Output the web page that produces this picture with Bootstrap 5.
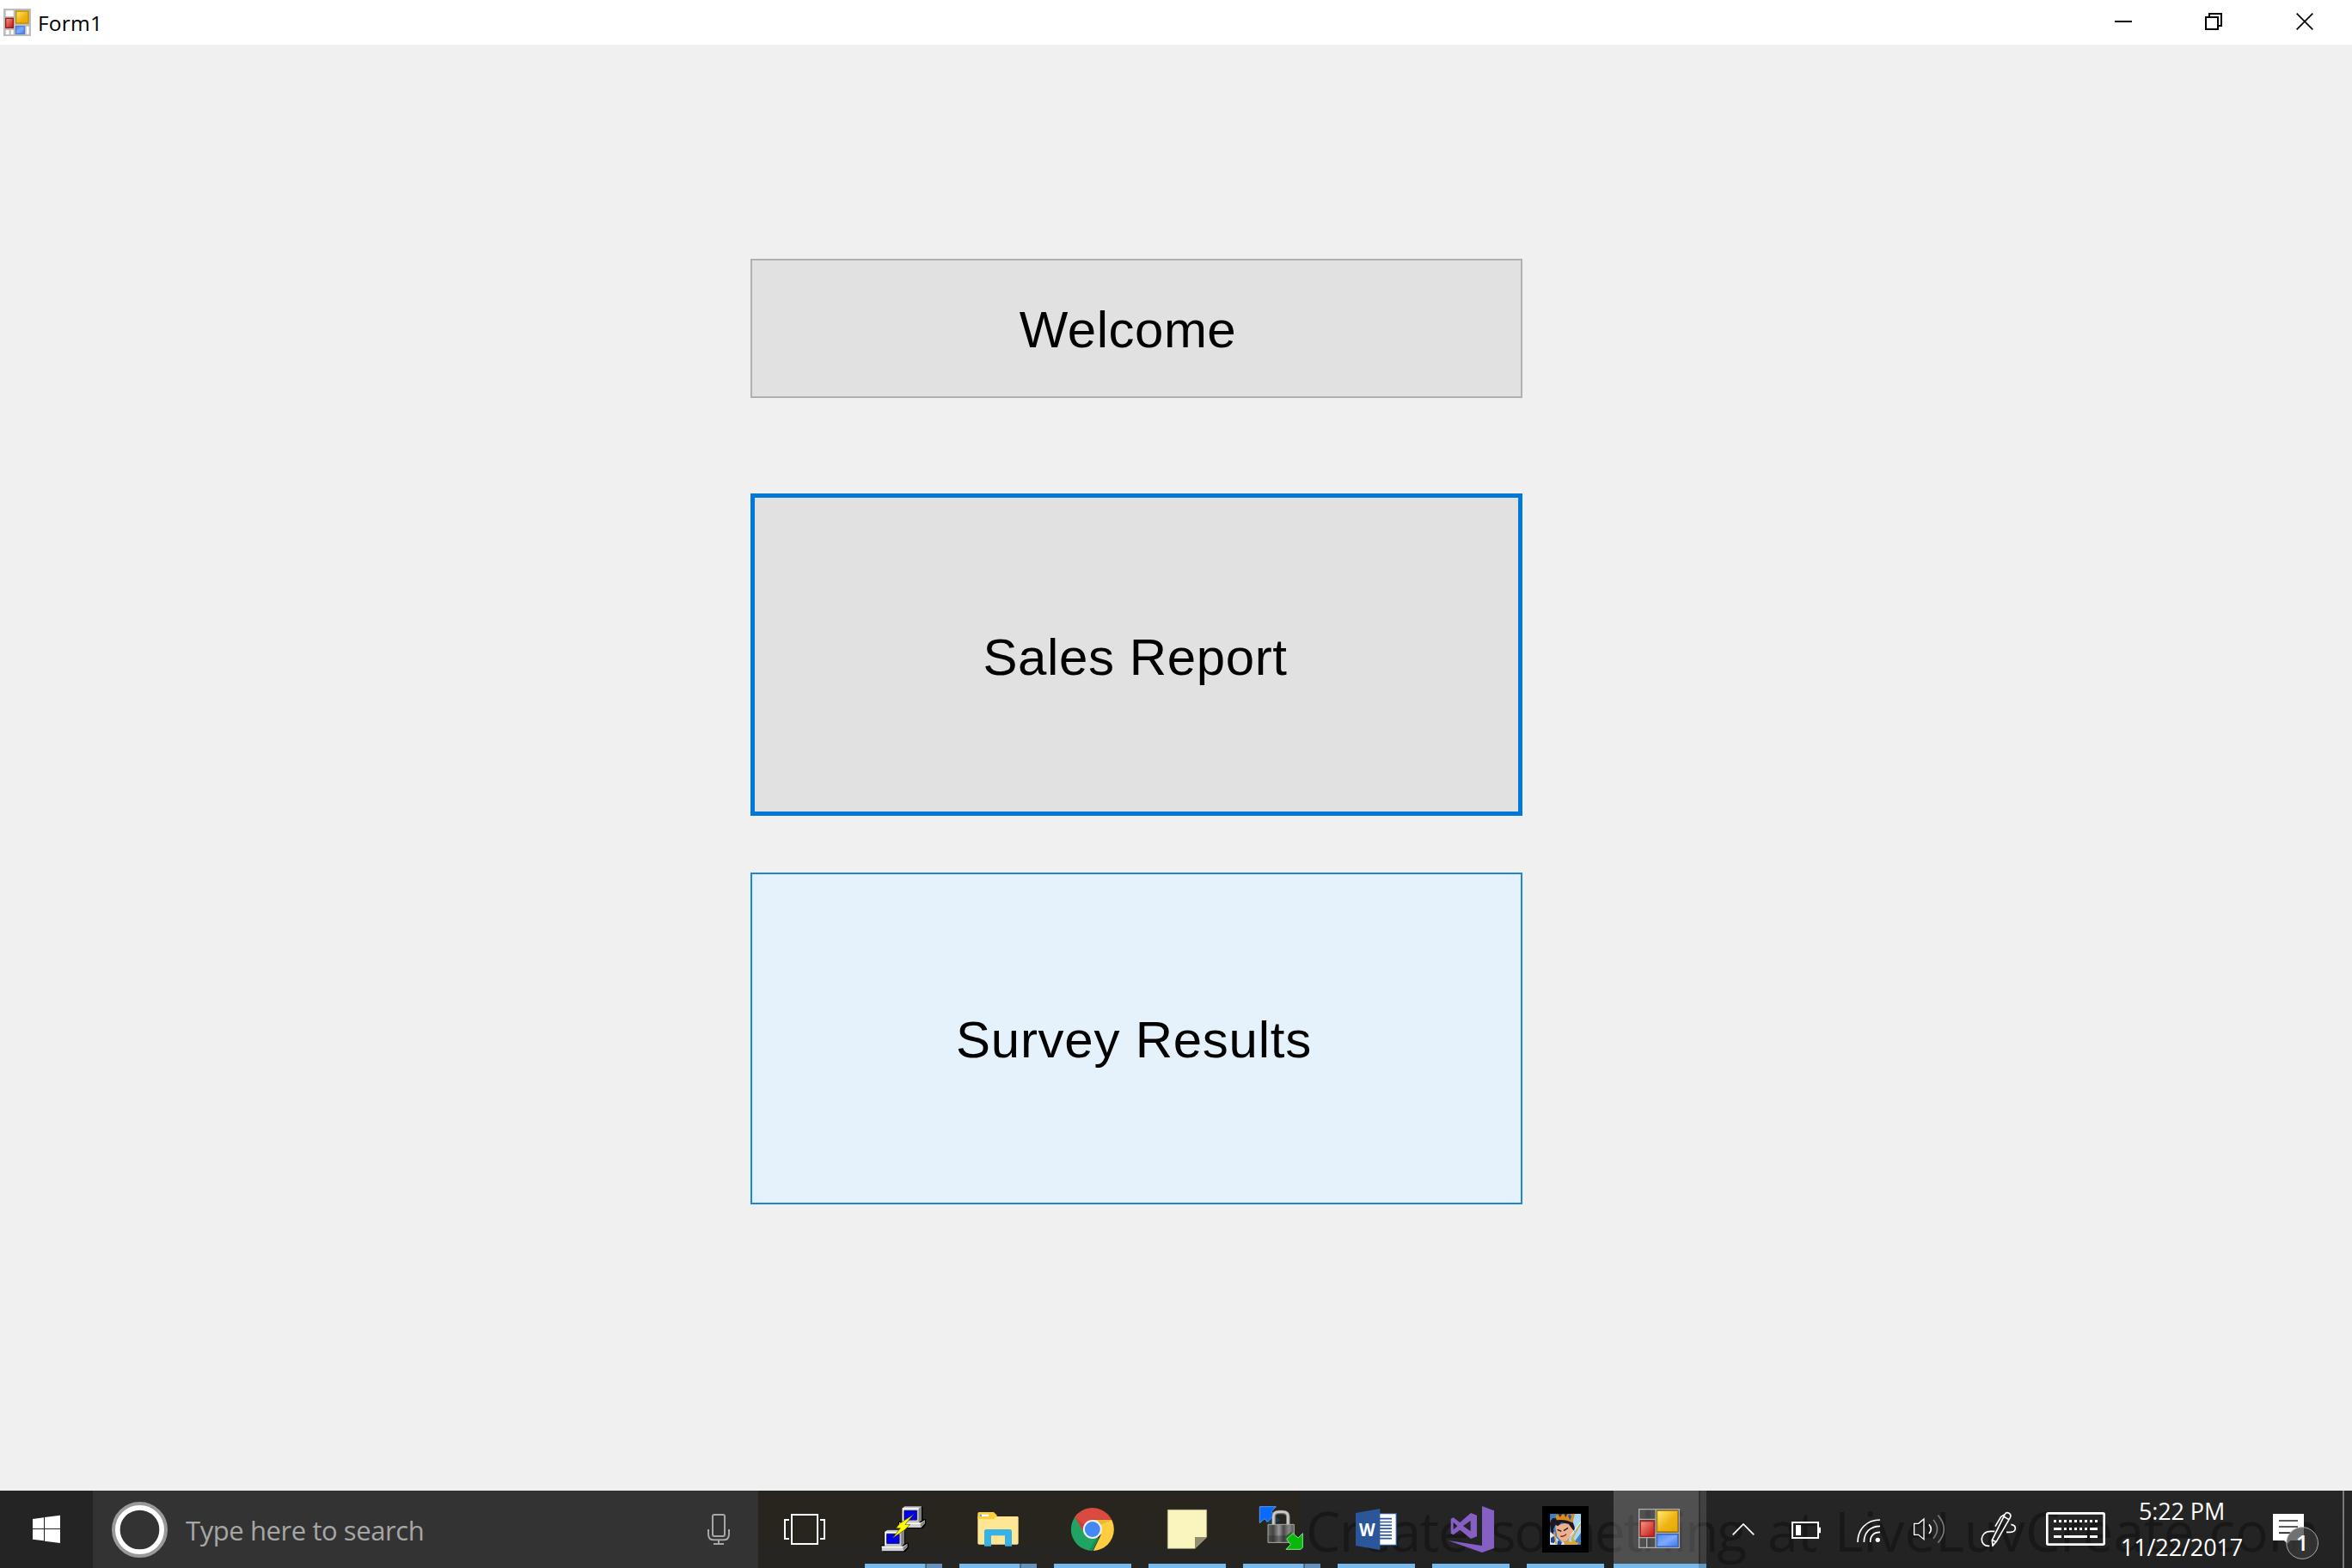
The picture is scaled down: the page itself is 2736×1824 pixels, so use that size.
<!DOCTYPE html>
<html lang="en">
<head>
<meta charset="utf-8">
<title>Form1</title>
<link rel="stylesheet" href="https://cdn.jsdelivr.net/npm/bootstrap@5.3.0/dist/css/bootstrap.min.css">
<style>
html,body{height:100%;margin:0;overflow:hidden}
body{width:2736px;height:1824px;background:#f0f0f0;font-family:"Open Sans","Noto Sans",sans-serif;color:#000}
svg{display:block;flex:none}
.titlebar{height:52px;background:#fff;padding-left:4px}
.caption-text{font-size:24.5px;line-height:32px;letter-spacing:.2px;margin-left:8px;padding-top:2px}
.form-area{padding:249px 0 0 873px;height:1682px}
.form-btn{width:898px;border-radius:0;padding:0;font-family:"Liberation Sans",Arial,sans-serif;font-size:60px;line-height:70px;color:#000;background:#e1e1e1;border:2px solid #b0b0b0}
.btn-welcome{height:162px;margin-bottom:111px;padding:4px 20px 0 0;letter-spacing:.5px}
.btn-sales{height:375px;margin-bottom:66px;border:5px solid #0078d7;padding:6px 3px 0 0;letter-spacing:.6px}
.btn-survey{height:386px;background:#e5f1fb;border:2px solid #1c86dc;padding:4px 6px 0 0;letter-spacing:.75px}
.taskbar{height:90px;background:linear-gradient(#28251e 0 63px,#272522 63px)}
.start-cell{background:#242424}
.search-box{width:774px;background:#333;color:#a6a6a6;font-size:31px}
.search-label{width:566px;letter-spacing:-.42px;padding:2px 0 0 2px;white-space:nowrap}
.right-glass{left:1512px;top:0;width:1224px;height:90px;background:linear-gradient(#262626,#222)}
.cells{z-index:1}
.clock{width:152px;color:#fff;font-size:27px;line-height:42px;letter-spacing:-.1px;padding:0 0 1px 4px;white-space:nowrap}
.peek{width:11px;border-left:2px solid #777}
</style>
<script src="https://cdn.jsdelivr.net/npm/bootstrap@5.3.0/dist/js/bootstrap.bundle.min.js"></script>
</head>
<body class="d-flex flex-column">
<header class="titlebar d-flex align-items-center flex-shrink-0">
  <svg width="32" height="32" viewBox="12 30 96 96">
    <defs>
      <linearGradient id="gy" x2="1" y2="1"><stop stop-color="#ffee78"/><stop offset=".55" stop-color="#efb414"/><stop offset="1" stop-color="#e6a800"/></linearGradient>
      <linearGradient id="gr" x2="1" y2="1"><stop stop-color="#f29a8c"/><stop offset="1" stop-color="#c41414"/></linearGradient>
      <linearGradient id="gb" x2="1" y2="1"><stop stop-color="#4f86ee"/><stop offset=".5" stop-color="#7eaaff"/><stop offset="1" stop-color="#3f78e8"/></linearGradient>
    </defs>
    <rect x="12" y="30" width="96" height="96" fill="#bdbdbd"/>
    <path fill="#fff" d="M20 37h27v20H20zM20 105h12v15H20zM38 105h9v15h-9zM92 92h9v27h-9z"/>
    <rect x="20" y="64" width="26" height="33" fill="url(#gr)" stroke="#a01818" stroke-width="4"/>
    <rect x="56" y="39" width="43" height="42" fill="url(#gy)" stroke="#c79412" stroke-width="5"/>
    <rect x="55" y="92" width="30" height="26" fill="url(#gb)" stroke="#3c74d8" stroke-width="3"/>
  </svg>
  <div class="caption-text">Form1</div>
  <svg class="ms-auto" width="320" height="52" viewBox="0 0 960 156" fill="none" stroke="#000" stroke-width="6">
    <path d="M132 75h60M450 60h42v42h-42zM462 60V48h42v42h-12"/><path d="M767 47l56 56M823 47l-56 56" stroke-width="5"/>
  </svg>
</header>
<main class="form-area d-flex flex-column align-items-start flex-shrink-0">
  <button class="btn form-btn btn-welcome">Welcome</button>
  <button class="btn form-btn btn-sales">Sales Report</button>
  <button class="btn form-btn btn-survey">Survey Results</button>
</main>
<footer class="taskbar position-relative flex-shrink-0">
  <div class="right-glass position-absolute overflow-hidden">
    <svg width="1224" height="90" viewBox="1512 1734 1224 90" fill="#161616" font-family="Open Sans" font-size="64" opacity=".8">
      <text x="1519" y="1805" textLength="190">Create</text>
      <text x="1733" y="1805" textLength="299">something</text>
      <text x="2056" y="1805" textLength="58">at</text>
      <text x="2134" y="1805" textLength="564">LiveLuvCreate.com</text>
    </svg>
  </div>
  <div class="cells position-relative d-flex h-100">
    <div class="start-cell"><svg width="108" height="90" viewBox="0 42 324 270" fill="#fff"><path d="M114 141l39-5v38h-39zM156 135l54-7v46h-54zM114 177h39v40l-39-5zM156 177h54v48l-54-7z"/></svg></div>
    <div class="search-box d-flex align-items-center">
      <svg width="106" height="90" viewBox="324 42 318 270" fill="none"><circle cx="487.500" cy="178.500" r="90" stroke="#999" stroke-width="15"/><circle cx="487.500" cy="178.500" r="77" stroke="#fff" stroke-width="17"/></svg>
      <div class="search-label">Type here to search</div>
      <svg width="102" height="90" viewBox="0 42 306 270" fill="none" stroke="#a6a6a6" stroke-width="6"><rect x="147" y="126" width="42" height="75" rx="6"/><path d="M132 177v17q0 20 20 20h32q20 0 20-20v-17M168 214v14M150 228h36"/></svg>
    </div>
    <svg width="114" height="90" viewBox="306 42 342 270" fill="none" stroke="#fff" stroke-width="6"><path d="M423 126h90v102h-90zM414 144h-15v66h15M522 144h15v66h-15"/></svg>
    <svg width="110" height="90" viewBox="648 42 330 270">
      <g id="pc"><path fill="#000" d="M807 103l9-7h60l4 4v42h12v17l-12 15h-76l-9-6v-18h12z"/><path fill="#c6c6c6" d="M809 103l8-6h59v48l-10 9h-57z"/><path fill="#808080" d="M866 105l10-8v48l-10 9z"/><path fill="#fff" d="M809 103h57v4h-53v44h-4z"/><path fill="#0000f0" stroke="#111166" stroke-width="3" d="M816 112h43v32h-43z"/><path fill="#d0d0d0" d="M798 154h74l15-9v12l-13 14h-76z"/><path fill="#fff" d="M798 154h74v5h-74z"/><path fill="#888" d="M872 159l15-14v12l-13 14z"/></g>
      <use href="#pc" x="-61" y="82"/>
      <path d="M848 125l-48 32-13 16h15l-27 35 42-29 19-19h-17z" fill="#ff0" stroke="#4b4600" stroke-width="2"/>
      <path fill="#76b9ed" d="M678 297h210v15H678z"/><path fill="#6492bd" d="M893 297h55v15h-55z"/><path fill="#4d7193" d="M888 297h5v15h-5z"/>
    </svg>
    <svg width="110" height="90" viewBox="18 42 330 270">
      <path fill="#ffe694" d="M112 132h138q4 0 4 4v89q0 5-5 5H117q-5 0-5-5z"/><path fill="#ffcf3a" d="M112 122q0-5 5-5h51l12 12-11 12h-57z"/><path fill="#fff" d="M120 125h30v7h-30z"/><path fill="#36b2e8" d="M120 125h6v7h-6zM135 236v-51q0-8 8-8h80q8 0 8 8v51h-24v-37h-48v37z"/>
      <path fill="#76b9ed" d="M48 297h210v15H48z"/><path fill="#6492bd" d="M263 297h55v15h-55z"/><path fill="#4d7193" d="M258 297h5v15h-5z"/>
    </svg>
    <svg width="110" height="90" viewBox="348 42 330 270">
      <clipPath id="cc"><circle cx="512.500" cy="177" r="75"/></clipPath>
      <g clip-path="url(#cc)"><path fill="#1fa463" d="M430 90h60l24 100 20 18-24 50h-80z"/><path fill="#ffcd40" d="M512 143h90v120h-92l32-67z"/><path fill="#db4a3f" d="M430 95h170v48h-88l-33 40-27-47z"/><path fill="#b83228" opacity=".45" d="M452 136l30 48 4-22z"/><path fill="#0a6b3c" opacity=".35" d="M541 200l-31 55-8-8 22-37z"/><path fill="#d7972b" opacity=".4" d="M530 143h55l-44 18z"/></g>
      <circle cx="512.500" cy="177" r="33" fill="#f1f1f1"/><circle cx="512.500" cy="177" r="27" fill="#4587f4"/>
      <path fill="#76b9ed" d="M378 297h270v15H378z"/>
    </svg>
    <svg width="110" height="90" viewBox="678 42 330 270"><path fill="#faf5bf" stroke="#b5b18c" stroke-width="2" d="M775 109h136v95l-41 40h-95z"/><path fill="#908d6e" d="M870 204h41l-41 40z"/><path fill="#76b9ed" d="M708 297h270v15H708z"/></svg>
    <svg width="110" height="90" viewBox="48 42 330 270">
      <defs><linearGradient id="lk"><stop stop-color="#666"/><stop offset=".2" stop-color="#444"/><stop offset=".42" stop-color="#999"/><stop offset=".6" stop-color="#494949"/><stop offset=".8" stop-color="#888"/><stop offset="1" stop-color="#555"/></linearGradient></defs>
      <path fill="#16465f" opacity=".8" d="M155 152l25-30 28 24-24 12z"/>
      <path fill="#086aff" stroke="#6199df" stroke-width="3" d="M136 98h57l-16 17 10 12-24 24-10-11-17 15z"/>
      <path d="M185 161v-28q0-16 18-16h13q19 0 19 16v28" fill="none" stroke="#777" stroke-width="14"/><path d="M184 161v-28q0-17 19-17h13q19 0 19 17v28" fill="none" stroke="#c9c9c9" stroke-width="8"/>
      <path fill="url(#lk)" stroke="#aaa" stroke-width="3" d="M165 160h91v63h-91z"/><path fill="#222" opacity=".35" d="M167 199h87v22h-87z"/>
      <path fill="#216b1d" d="M226 202l20-15 14 15-20 24z"/><path fill="#08b90c" stroke="#8be08a" stroke-width="3" d="M228 247l16-17-14-19 22-20 18 16 16-16v50l-7 6z"/>
      <path fill="#76b9ed" d="M78 297h210v15H78z"/><path fill="#6492bd" d="M293 297h55v15h-55z"/><path fill="#4d7193" d="M288 297h5v15h-5z"/>
    </svg>
    <svg width="110" height="90" viewBox="378 42 330 270">
      <path fill="#fff" stroke="#2b579a" stroke-width="4" d="M550 122h63v110h-63z"/><path stroke="#2b579a" stroke-width="5" d="M554 140h43M554 151.500h43M554 163h43M554 174.500h43M554 186h43M554 197.500h43M554 209h43"/>
      <path fill="#2b579a" d="M471 120l85-15v144l-85-15z"/><text x="483" y="201" fill="#fff" font-family="Open Sans" font-weight="700" font-size="62" textLength="56" lengthAdjust="spacingAndGlyphs">W</text>
      <path fill="#76b9ed" d="M408 297h270v15H408z"/>
    </svg>
    <svg width="110" height="90" viewBox="-132 42 330 270">
      <path fill="#865fc5" fill-rule="evenodd" d="M72 96l42 16v131l-42 15-119-42 119 18zM-37 140l9-4 23 17 38-33 21 8v74l-21 8-38-31-23 17-9-5zM-28 153v25l14-12zM32 147v37L6 165z"/>
      <path fill="#76b9ed" d="M-102 297h270v15h-270z"/>
    </svg>
    <svg width="110" height="90" viewBox="198 42 330 270">
      <clipPath id="gc"><path d="M309 123h108v108H309z"/></clipPath>
      <path d="M282 96h162v162H282z"/>
      <g clip-path="url(#gc)">
        <path fill="#3f7fc4" d="M309 123h108v108H309z"/><path fill="#a7d9f5" d="M390 123h27v66l-30 42h-20l20-50z"/>
        <path fill="#ecb18c" d="M328 166l44-14 20 17-6 30-20 20-14 3-18-20z"/>
        <path fill="#1c1720" d="M309 160q-1-12 10-22l60 5q19 13 16 42l-9-10-12-17-25-4-12 12-8-6-8 16 3 22-11-13z"/>
        <path fill="#d98c20" d="M328 128l68-5-8 31q-26-14-56-9z"/><path fill="#5b2511" d="M338 124l6 12 8-13zM358 124l6 12 6-13z"/><path fill="#214fc4" d="M372 130l7-5 5 8-5 12z"/>
        <path d="M335 178l14 6M357 182l15-10" stroke="#221519" stroke-width="4"/><path d="M346 201q12 3 20-7" stroke="#7a2020" stroke-width="4" fill="none"/>
        <path fill="#dce9f2" d="M309 186l14 10 20 24 17 2 8 12h-59z"/><path fill="#1d4b95" d="M312 207l10-6 9 9-8 15-11-2zM336 216l15 6-4 11h-13z"/><path d="M323 186l8 43M414 158l-30 57" stroke="#d9a23a" stroke-width="5"/><path fill="#e3a12e" d="M357 224l14-8 12 6 8-14 8 13 11 3-6 7h-44z"/><path d="M417 150l-37 50" stroke="#fff" stroke-width="3"/>
      </g>
      <path fill="#76b9ed" d="M228 297h270v15H228z"/>
    </svg>
    <svg width="110" height="90" viewBox="528 42 330 270">
      <path fill="#fff" opacity=".2" d="M531 42h297v255H531z"/><path fill="#fff" opacity=".05" d="M828 42h6v255h-6z"/><path fill="#fff" opacity=".13" d="M834 42h21v255h-21z"/>
      <path d="M620 107h140v134H620zM678 107v134M620 142h58M620 206h58M647 206v35M678 190h82" fill="none" stroke="#b0b0b0" stroke-width="4"/>
      <rect x="625" y="149" width="47" height="52" fill="url(#gr)" stroke="#c41c14" stroke-width="4"/>
      <rect x="683" y="112" width="72" height="73" fill="url(#gy)" stroke="#b98300" stroke-width="4"/>
      <rect x="683" y="195" width="72" height="42" fill="url(#gb)" stroke="#376fda" stroke-width="4"/>
      <path fill="#76b9ed" d="M531 297h297v15H531z"/><path fill="#6095c1" d="M828 297h27v15h-27z"/>
    </svg>
    <svg width="74" height="90" viewBox="18 42 222 270" fill="none" stroke="#fff" stroke-width="5"><path d="M107 196l37-37 37 37"/></svg>
    <svg width="85" height="90" viewBox="240 42 255 270" fill="none" stroke="#fff" stroke-width="6"><path d="M315 153h90v54h-90z"/><path fill="#fff" stroke="none" d="M327 162h18v36h-18zM408 170h6v20h-6z"/></svg>
    <svg width="70" height="90" viewBox="495 42 210 270" fill="none" stroke="#fff" stroke-width="5"><path d="M543 222c0-46 32-78 78-78M565 222c0-34 22-56 56-56M587 222c0-22 12-35 34-35"/><circle cx="613" cy="214" r="8" fill="#fff" stroke="none"/></svg>
    <svg width="75" height="90" viewBox="705 42 225 270" fill="none" stroke="#fff" stroke-width="4"><path d="M740 157h15l19-16v71l-19-16h-15z"/><path d="M792 160q14 16 0 32" stroke-width="5"/><path stroke="#777" stroke-width="5" d="M807 144q27 32 0 65M823 128q42 48 0 96"/></svg>
    <svg width="80" height="90" viewBox="90 42 240 270" fill="none" stroke="#fff" stroke-width="5" stroke-linejoin="round"><path d="M217 124q5-8 14-3 9 5 4 15l-47 82-14 17-2-20zM212 132l19 11M171 214l16 7M217 124l-14 9-20 34M238 160q15 3 15 13 0 14-18 14h-13M181 184h-14c-40 0-40 51-8 51h4"/><path fill="#fff" d="M172 226l8 2-6 7z" stroke="none"/></svg>
    <svg width="90" height="90" viewBox="330 42 270 270" fill="none" stroke="#fff" stroke-width="8"><rect x="364" y="121" width="199" height="109" rx="4"/><path stroke-width="9" stroke-dasharray="9 9" d="M387 148.500h153M423 175.500h84"/><path stroke-width="9" d="M387 175.500h27M513 175.500h27M387 202.500h27M423 202.500h81M513 202.500h27"/></svg>
    <div class="clock d-flex flex-column justify-content-center text-center"><div>5:22 PM</div><div>11/22/2017</div></div>
    <svg width="113" height="90" viewBox="486 42 339 270">
      <path fill="#fff" d="M582 123h108v93h-47l-10 11-12-11h-39z"/><path d="M603 147h66M603 168h66M603 189.500h40" stroke="#242424" stroke-width="5"/>
      <circle cx="684.500" cy="225" r="55" fill="#3a3a3a" fill-opacity=".72" stroke="#aaa" stroke-width="3"/><text x="684.500" y="252" text-anchor="middle" fill="#fff" font-family="Open Sans" font-weight="600" font-size="77">1</text>
    </svg>
    <div class="peek"></div>
  </div>
</footer>
</body>
</html>
